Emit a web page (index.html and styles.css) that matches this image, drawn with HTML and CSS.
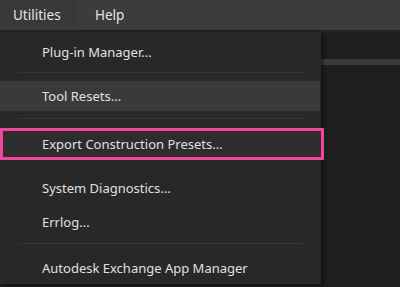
FILE: index.html
```html
<!DOCTYPE html>
<html lang="en">
<head>
  <meta charset="UTF-8" />
  <title>Utilities menu</title>
  <link rel="stylesheet" href="styles.css">
</head>
<body>
  <div class="menubar">
    <div class="menubar-item active">Utilities</div>
    <div class="menubar-item">Help</div>
  </div>

  <div class="workspace">
    <div class="menu">
      <div class="item first">Plug-in Manager...</div>
      <div class="sep s1"></div>
      <div class="item hover">Tool Resets...</div>
      <div class="sep s2"></div>
      <div class="item marked">Export Construction Presets...</div>
      <div class="item gap">System Diagnostics...</div>
      <div class="item">Errlog...</div>
      <div class="sep s3"></div>
      <div class="item">Autodesk Exchange App Manager</div>
    </div>
    <div class="side">
      <div class="side-bar"></div>
    </div>
  </div>
</body>
</html>
```

FILE: styles.css
```css
body {
  margin: 0;
  background: #1e1e1e;
  font-family: "Noto Sans", "Open Sans", sans-serif;
  font-size: 13px;
  color: #e0e0e0;
  width: 400px;
  height: 287px;
  overflow: hidden;
}
.menubar {
  display: flex;
  height: 30px;
  background: #3c3c3c;
  border-bottom: 2px solid #232323;
}
.menubar-item {
  display: flex;
  align-items: center;
  padding: 0 16px 0 13px;
  font-size: 13.5px;
  color: #e4e4e4;
}
.menubar-item.active {
  background: #393939;
  width: 49px;
}
.menubar-item + .menubar-item {
  padding-left: 17px;
}
.workspace {
  display: flex;
}
.menu {
  width: 321px;
  height: 247px;
  background: #282828;
  padding-top: 5px;
  box-shadow: 2px 2px 4px rgba(0,0,0,0.45);
  position: relative;
  z-index: 1;
}
.item {
  height: 30px;
  display: flex;
  align-items: center;
  padding-left: 42px;
}
.item.hover {
  background: #3a3a3a;
  margin-right: 1px;
}
.item.marked {
  height: 26px;
  border: 3px solid #f0479b;
  padding-left: 39px;
  margin-right: -3px;
  background: #2d2d2d;
}
.item.gap {
  margin-top: 13px;
}
.item + .item {
  margin-top: 4px;
}
.item.marked + .item.gap {
  margin-top: 13px;
}
.sep {
  height: 1px;
  background: #363636;
  margin: 0 18px;
}
.s1 { margin-top: 5px; margin-bottom: 8px; }
.s2 { margin-top: 7px; margin-bottom: 9px; }
.s3 { margin-top: 6px; margin-bottom: 9px; }
.side {
  flex: 1;
  padding-top: 27px;
}
.side-bar {
  height: 6px;
  background: #3a3a3a;
}
```
